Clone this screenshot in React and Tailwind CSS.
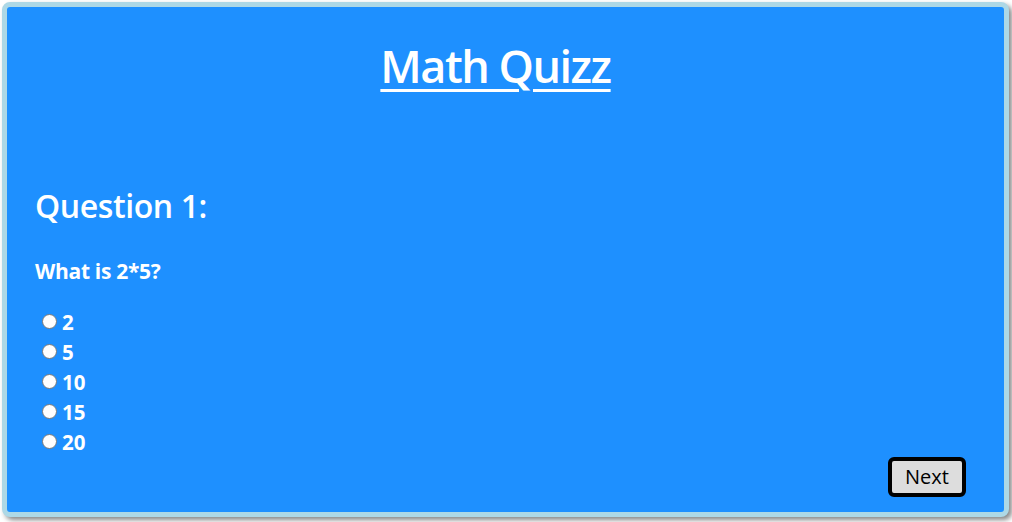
const options = ["2", "5", "10", "15", "20"];

function App() {
  return (
    <div className="w-[1012px] h-[522px] bg-white p-[2px] font-['Open_Sans',sans-serif]">
      <div className="w-[1007px] h-[515px] border-[5px] border-[#add8e6] rounded-[8px] bg-[#1e90ff] shadow-[3px_3px_5px_#888] text-white flex flex-col px-[28px]">
        <h1 className="text-center text-[45px] font-semibold tracking-[-1.5px] leading-none underline underline-offset-[6px] decoration-[3px] mt-[36px] pr-[20px]">
          Math Quizz
        </h1>
        <h2 className="text-[32px] font-semibold tracking-[-0.4px] leading-none mt-[102px]">Question 1:</h2>
        <p className="text-[21px] font-bold tracking-[-0.3px] leading-none mt-[39px]">What is 2*5?</p>
        <ul className="mt-[25px]">
          {options.map((o) => (
            <li key={o} className="h-[30px] leading-[30px] text-[20.5px] font-bold flex items-center">
              <span className="shrink-0 ml-[7px] mr-[5px] w-[15px] h-[15px] -mt-[2px] rounded-full bg-white border-[1.5px] border-[#7a7a7a]" />
              <span>{o}</span>
            </li>
          ))}
        </ul>
        <div className="flex justify-end pr-[10px]">
          <button className="w-[78px] h-[40px] border-[4px] border-black rounded-[6px] bg-[#dddddd] text-black text-[20px] leading-none">
            Next
          </button>
        </div>
      </div>
    </div>
  );
}

export default App;
